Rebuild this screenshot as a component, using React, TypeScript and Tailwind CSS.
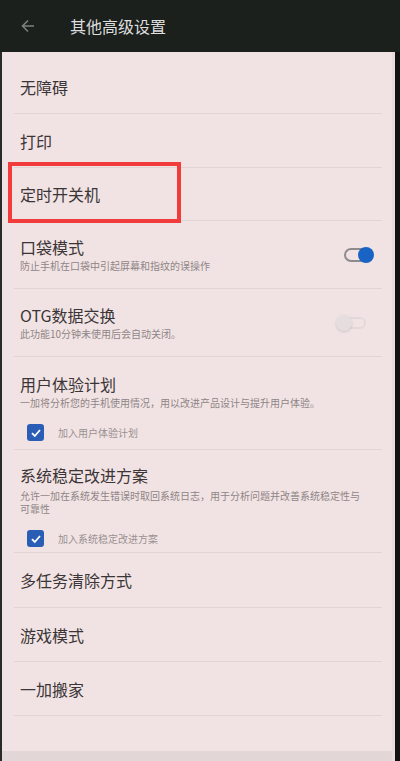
import React from "react";

const font = { fontFamily: '"Noto Sans CJK SC", "Noto Sans", sans-serif' };

function Divider() {
  return <div className="mx-[12px] mr-[10px] h-px bg-[#e2d4d4]" />;
}

function Toggle({ on }: { on: boolean }) {
  if (on) {
    return (
      <div className="relative w-[30px] h-[16px] mr-[18px]">
        <div className="absolute left-0 top-[1px] w-[26px] h-[14px] rounded-full border-2 border-[#8d8a8e]" />
        <div className="absolute right-0 top-0 w-[16px] h-[16px] rounded-full bg-[#1863c4]" />
      </div>
    );
  }
  return (
    <div className="relative w-[30px] h-[16px] mr-[26px]">
      <div className="absolute right-0 top-[2px] w-[26px] h-[12px] rounded-full border-2 border-[#e2dada]" />
      <div className="absolute left-0 top-0 w-[16px] h-[16px] rounded-full bg-[#e6dede] shadow-sm" />
    </div>
  );
}

function Check({ label, className }: { label: string; className: string }) {
  return (
    <div className={"flex items-center pl-[25px] " + className}>
      <div className="w-[17px] h-[17px] rounded-[3px] bg-[#2a5eb6] flex items-center justify-center">
        <svg width="12" height="12" viewBox="0 0 12 12">
          <path d="M2 6.2 L4.8 9 L10 3" fill="none" stroke="#fff" strokeWidth="1.8" />
        </svg>
      </div>
      <span className="ml-[14px] text-[10px] text-[#9a9092]">{label}</span>
    </div>
  );
}

function Simple({ title, h = 53 }: { title: string; h?: number }) {
  return (
    <>
      <div
        className="flex items-center pl-[18px] text-[16px] text-[#3b3537]"
        style={{ height: h }}
      >
        {title}
      </div>
      <Divider />
    </>
  );
}

function SwitchRow({ title, sub, on }: { title: string; sub: string; on: boolean }) {
  return (
    <>
      <div className="h-[67px] flex items-center justify-between pl-[18px]">
        <div className="flex flex-col">
          <span className="text-[16px] leading-[22px] text-[#3b3537]">{title}</span>
          <span className="text-[10px] leading-[16px] text-[#8f8587]">{sub}</span>
        </div>
        <Toggle on={on} />
      </div>
      <Divider />
    </>
  );
}

export default function App() {
  return (
    <div className="w-[400px] h-[761px] bg-[#141614] flex flex-col overflow-hidden" style={font}>
      <div className="h-[52px] flex items-center bg-[#1b201d]">
        <svg className="ml-[20px]" width="16" height="16" viewBox="0 0 16 16">
          <path d="M14 8 H2.5 M8 2.5 L2.5 8 L8 13.5" fill="none" stroke="#7b807c" strokeWidth="1.6" />
        </svg>
        <span className="ml-[34px] text-[16px] text-[#dedede]">其他高级设置</span>
      </div>
      <div className="flex flex-1">
        <div className="w-[2px] bg-[#2a2a2a]" />
        <div className="w-[390px] flex flex-col bg-[#f1e3e3]">
          <div className="flex-1 pt-[8px]">
            <Simple title="无障碍" />
            <Simple title="打印" />
            <div className="relative">
              <Simple title="定时开关机" h={52} />
              <div className="absolute left-[6px] top-[-6px] w-[173px] h-[61px] border-[4px] border-[#f23b3b]" />
            </div>
            <SwitchRow title="口袋模式" sub="防止手机在口袋中引起屏幕和指纹的误操作" on />
            <SwitchRow title="OTG数据交换" sub="此功能10分钟未使用后会自动关闭。" on={false} />
            <div className="h-[92px] pl-[18px] pt-[16px]">
              <div className="text-[16px] leading-[22px] text-[#3b3537]">用户体验计划</div>
              <div className="text-[10px] leading-[16px] text-[#8f8587]">
                一加将分析您的手机使用情况，用以改进产品设计与提升用户体验。
              </div>
              <div className="-ml-[18px]">
                <Check label="加入用户体验计划" className="mt-[13px]" />
              </div>
            </div>
            <Divider />
            <div className="h-[102px] pl-[18px] pr-[28px] pt-[14px]">
              <div className="text-[16px] leading-[22px] text-[#3b3537]">系统稳定改进方案</div>
              <div className="text-[10px] leading-[13px] text-[#8f8587] mt-[3px]">
                允许一加在系统发生错误时取回系统日志，用于分析问题并改善系统稳定性与可靠性
              </div>
              <div className="-ml-[18px]">
                <Check label="加入系统稳定改进方案" className="mt-[15px]" />
              </div>
            </div>
            <Divider />
            <Simple title="多任务清除方式" h={54} />
            <Simple title="游戏模式" />
            <Simple title="一加搬家" />
          </div>
          <div className="h-[10px] bg-[#e3d6d6]" />
        </div>
        <div className="w-[3px] bg-[#e9dcdc]" />
        <div className="flex-1 bg-[#121212]" />
      </div>
    </div>
  );
}
